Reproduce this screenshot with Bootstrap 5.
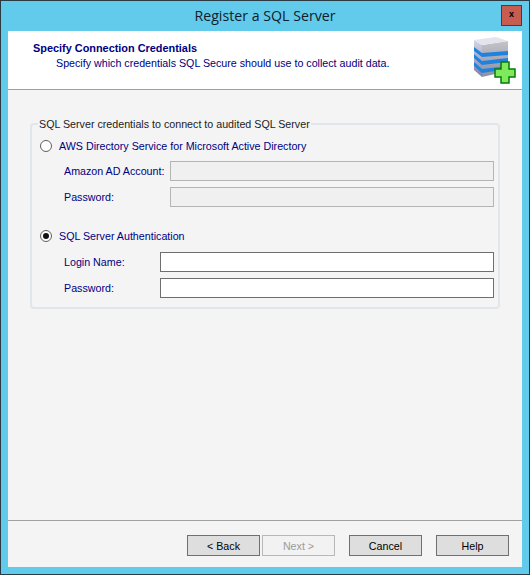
<!DOCTYPE html>
<html lang="en">
<head>
    <meta charset="UTF-8">
    <meta name="viewport" content="width=device-width, initial-scale=1.0">
    <title>Register a SQL Server</title>
    <link rel="stylesheet" href="https://cdn.jsdelivr.net/npm/bootstrap@5.3.3/dist/css/bootstrap.min.css">
    <style>
        html, body { height: 100%; }
        body { background: #f4f4f4; font-family: "Liberation Sans", Arial, sans-serif; font-size: 10.7px; color: #000080; }
        .win-frame { width: 530px; height: 575px; background: #62cbeb; border: 1px solid #2b3b44; }
        .win-title { height: 30px; }
        .win-title-text { font-family: "Open Sans", sans-serif; font-size: 14.2px; color: #10202a; line-height: 30px; }
        .win-close { top: 4px; right: 7px; width: 21px; height: 21px; background: #c75c50; border: 1px solid #4a3a3a; color: #000; font-size: 9px; font-weight: 700; line-height: 17px; }
        .win-body { margin: 0 7px 7px; background: #f4f4f4; height: 536px; }
        .wiz-head { height: 59px; background: #fff; border-bottom: 1px solid #a0a0a0; padding: 10px 25px 0; }
        .wiz-head-title { font-size: 10.9px; font-weight: 700; line-height: 14px; color: #000080; }
        .wiz-head-sub { padding-left: 23px; line-height: 16px; }
        .wiz-icon { top: 2px; right: 2px; }
        .cred-group { margin: 27px 22px 0; height: 192px; border: 2px solid #e0e6ec; border-radius: 4px; padding: 0 7px; }
        .cred-group legend { float: none; width: auto; font-size: 10.7px; color: #222; margin: 0 0 0 -1px; padding: 0 1px; line-height: 14px; }
        .cred-radio { height: 14px; gap: 7px; line-height: 14px; padding-left: 1px; }
        .radio-first { margin-top: 8px; margin-bottom: 8px; }
        .radio-second { margin-top: 22px; margin-bottom: 9px; }
        .radio-dot { width: 12px; height: 12px; border: 1px solid #5f5f5f; border-radius: 50%; background: #fff; }
        .radio-dot.is-on::after { content: ""; width: 6px; height: 6px; border-radius: 50%; background: #111; }
        .cred-row { height: 20px; margin-bottom: 6px; padding-left: 25px; }
        .cred-label { flex: none; }
        .cred-label.is-wide { width: 106px; }
        .cred-label.is-narrow { width: 96px; }
        .cred-input { flex: none; width: 334px; height: 20px; border: 1px solid #6e6e6e; background: #fff; padding: 0 2px; }
        .cred-input.is-short { width: 324px; }
        .cred-input:disabled { border-color: #b4b4b4; background: #f0f0f0; }
        .wiz-foot { bottom: 0; left: 0; right: 0; height: 47px; border-top: 1px solid #a0a0a0; padding: 14px 13px 0 0; gap: 14px; }
        .wiz-pair { gap: 2px; }
        .wiz-btn { width: 73px; height: 21px; border: 1px solid #707070; border-radius: 0; background: #dedede; padding: 0; font-size: 10.7px; line-height: 18px; color: #000; }
        .wiz-btn:disabled { border-color: #b8b8b8; background: #f2f2f2; color: #9a9a9a; opacity: 1; }
    </style>
</head>
<body class="m-0">

<div class="win-frame position-relative overflow-hidden">
    <div class="win-title position-relative text-center">
        <span class="win-title-text">Register a SQL Server</span>
        <div class="win-close position-absolute text-center">x</div>
    </div>
    <div class="win-body position-relative">
        <div class="wiz-head position-relative">
            <div class="wiz-head-title">Specify Connection Credentials</div>
            <div class="wiz-head-sub">Specify which credentials SQL Secure should use to collect audit data.</div>
            <svg class="wiz-icon position-absolute" width="50" height="52" viewBox="0 0 50 52">
                <defs>
                    <linearGradient id="cube-front" x1="0" y1="0" x2="0" y2="1">
                        <stop offset="0" stop-color="#c4c4c8"/>
                        <stop offset="1" stop-color="#8e8ea8"/>
                    </linearGradient>
                    <linearGradient id="cube-left" x1="0" y1="0" x2="0" y2="1">
                        <stop offset="0" stop-color="#d4d6e6"/>
                        <stop offset="1" stop-color="#7c7fb0"/>
                    </linearGradient>
                </defs>
                <path d="M4 7 12 12V44L4 37Z" fill="url(#cube-left)"/>
                <path d="M12 12 38 8V38L12 44Z" fill="url(#cube-front)"/>
                <path d="M4 7 26 4 38 8 12 12Z" fill="#e4e4ee"/>
                <path d="M12 20 38 18V22L12 24ZM12 28 38 25V29L12 32ZM12 36 38 33V36L12 40Z" fill="#1f83dd"/>
                <path d="M4 14 12 20V24L4 18ZM4 21 12 28V32L4 25ZM4 29 12 36V40L4 33Z" fill="#1f83dd"/>
                <path d="M31 29H39V36H45V44H39V50H31V44H25V36H31Z" fill="#7ee95a" stroke="#0a7a0a" stroke-width="1.5"/>
            </svg>
        </div>

        <fieldset class="cred-group">
            <legend>SQL Server credentials to connect to audited SQL Server</legend>
            <div class="cred-radio radio-first d-flex align-items-center">
                <span class="radio-dot d-flex align-items-center justify-content-center"></span>
                <span>AWS Directory Service for Microsoft Active Directory</span>
            </div>
            <div class="cred-row d-flex align-items-center">
                <span class="cred-label is-wide">Amazon AD Account:</span>
                <input class="cred-input is-short" type="text" disabled>
            </div>
            <div class="cred-row d-flex align-items-center">
                <span class="cred-label is-wide">Password:</span>
                <input class="cred-input is-short" type="text" disabled>
            </div>
            <div class="cred-radio radio-second d-flex align-items-center">
                <span class="radio-dot is-on d-flex align-items-center justify-content-center"></span>
                <span>SQL Server Authentication</span>
            </div>
            <div class="cred-row d-flex align-items-center">
                <span class="cred-label is-narrow">Login Name:</span>
                <input class="cred-input" type="text">
            </div>
            <div class="cred-row d-flex align-items-center">
                <span class="cred-label is-narrow">Password:</span>
                <input class="cred-input" type="text">
            </div>
        </fieldset>

        <div class="wiz-foot position-absolute d-flex justify-content-end">
            <div class="wiz-pair d-flex">
                <button class="wiz-btn" type="button">&lt; Back</button>
                <button class="wiz-btn" type="button" disabled>Next &gt;</button>
            </div>
            <button class="wiz-btn" type="button">Cancel</button>
            <button class="wiz-btn" type="button">Help</button>
        </div>
    </div>
</div>

<script src="https://cdn.jsdelivr.net/npm/bootstrap@5.3.3/dist/js/bootstrap.bundle.min.js"></script>
</body>
</html>
